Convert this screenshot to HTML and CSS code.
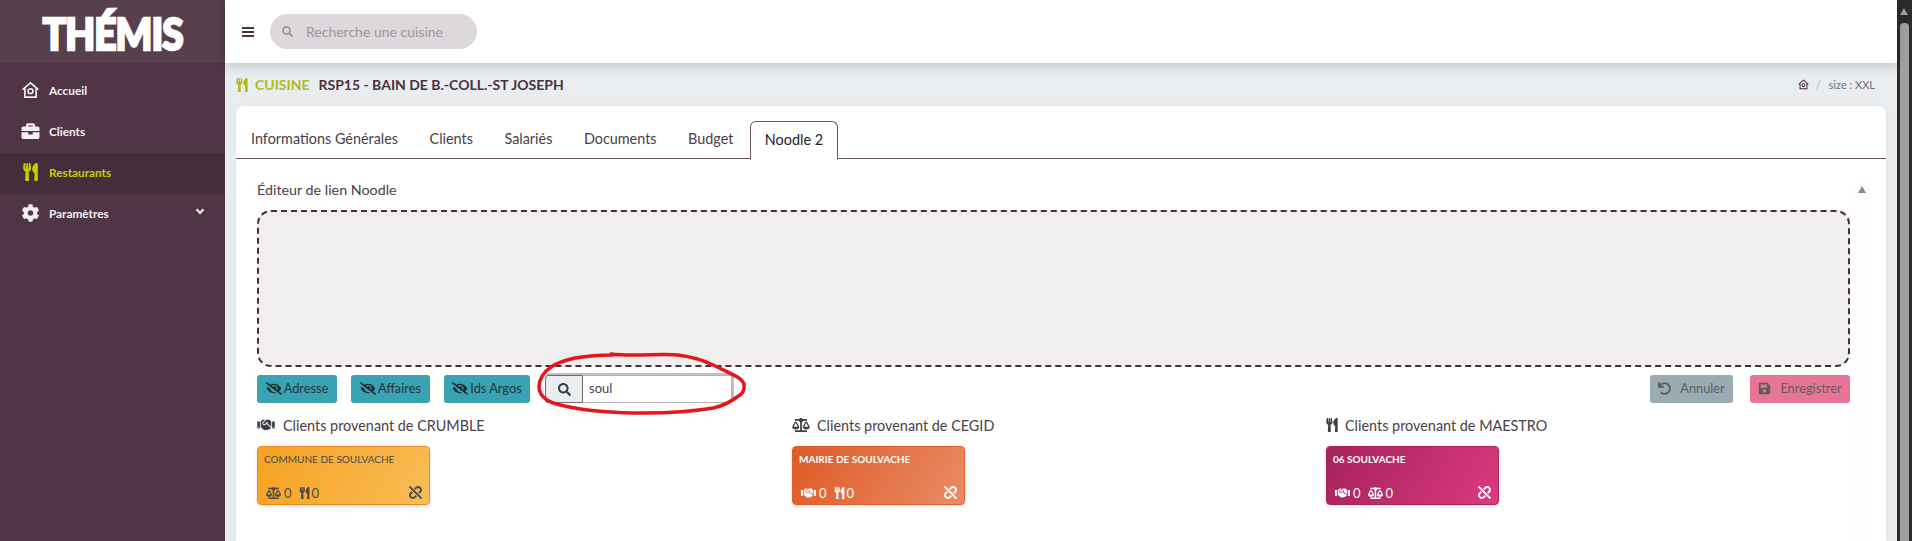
FILE: index.html
```html
<!DOCTYPE html>
<html lang="fr">
<head>
    <meta charset="UTF-8">
    <title>Thémis - Cuisine</title>
    <link rel="stylesheet" href="styles.css">
</head>
<body>

<svg class="defs" width="0" height="0">
    <symbol id="i-search" viewBox="0 0 512 512"><path d="M505 442.7L405.3 343c-4.5-4.5-10.6-7-17-7H372c27.6-35.3 44-79.7 44-128C416 93.1 322.9 0 208 0S0 93.1 0 208s93.1 208 208 208c48.3 0 92.7-16.4 128-44v16.3c0 6.4 2.5 12.5 7 17l99.7 99.7c9.4 9.4 24.6 9.4 33.9 0l28.3-28.3c9.4-9.4 9.4-24.6.1-34zM208 336c-70.7 0-128-57.2-128-128 0-70.7 57.2-128 128-128 70.7 0 128 57.2 128 128 0 70.7-57.2 128-128 128z"/></symbol>
    <symbol id="i-utensils" viewBox="0 0 416 512"><path d="M207.9 15.2c.8 4.7 16.1 94.5 16.1 128.8 0 52.3-27.8 89.6-68.9 104.6L168 486.7c.7 13.7-10.2 25.3-24 25.3H80c-13.7 0-24.7-11.5-24-25.3l12.9-238.1C27.7 233.6 0 196.2 0 144 0 109.6 15.3 19.9 16.1 15.2 19.3-5.1 61.4-5.4 64 16.3v141.2c1.3 3.4 15.1 3.2 16 0 1.4-25.3 7.9-139.2 8-141.8 3.3-20.8 44.7-20.8 47.9 0 .2 2.7 6.6 116.5 8 141.8.9 3.2 14.8 3.4 16 0V16.3c2.6-21.6 44.8-21.4 48-1.1zm119.2 285.7l-15 185.1c-1.2 14 9.9 26 23.9 26h56c13.3 0 24-10.7 24-24V24c0-13.2-10.7-24-24-24-82.5 0-221.4 178.5-64.9 300.9z"/></symbol>
    <symbol id="i-briefcase" viewBox="0 0 512 512"><path d="M320 336c0 8.84-7.16 16-16 16h-96c-8.84 0-16-7.16-16-16v-48H0v144c0 25.6 22.4 48 48 48h416c25.6 0 48-22.4 48-48V288H320v48zm144-208h-80V80c0-25.6-22.4-48-48-48H176c-25.6 0-48 22.4-48 48v48H48c-25.6 0-48 22.4-48 48v80h512v-80c0-25.6-22.4-48-48-48zm-144 0H192V96h128v32z"/></symbol>
    <symbol id="i-cog" viewBox="0 0 512 512"><path d="M487.4 315.7l-42.6-24.6c4.3-23.2 4.3-47 0-70.2l42.6-24.6c4.9-2.8 7.1-8.6 5.5-14-11.1-35.6-30-67.8-54.7-94.6-3.8-4.1-10-5.1-14.8-2.3L380.8 110c-17.9-15.4-38.5-27.3-60.8-35.1V25.8c0-5.6-3.9-10.5-9.4-11.7-36.7-8.2-74.3-7.8-109.2 0-5.5 1.2-9.4 6.1-9.4 11.7V75c-22.2 7.9-42.8 19.8-60.8 35.1L88.7 85.5c-4.9-2.8-11-1.9-14.8 2.3-24.7 26.7-43.6 58.9-54.7 94.6-1.7 5.4.6 11.2 5.5 14L67.3 221c-4.3 23.2-4.3 47 0 70.2l-42.6 24.6c-4.9 2.8-7.1 8.6-5.5 14 11.1 35.6 30 67.8 54.7 94.6 3.8 4.1 10 5.1 14.8 2.3l42.6-24.6c17.9 15.4 38.5 27.3 60.8 35.1v49.2c0 5.6 3.9 10.5 9.4 11.7 36.7 8.2 74.3 7.8 109.2 0 5.5-1.2 9.4-6.1 9.4-11.7v-49.2c22.2-7.9 42.8-19.8 60.8-35.1l42.6 24.6c4.9 2.8 11 1.9 14.8-2.3 24.7-26.7 43.6-58.9 54.7-94.6 1.5-5.5-.7-11.3-5.6-14.1zM256 336c-44.1 0-80-35.9-80-80s35.9-80 80-80 80 35.9 80 80-35.9 80-80 80z"/></symbol>
    <symbol id="i-home" viewBox="0 0 24 24"><path d="M1.5 11.5L12 2.5l10.5 9M4.5 9.5V21.5h15V9.5" fill="none" stroke="currentColor" stroke-width="2.2"/><circle cx="12" cy="13.5" r="3.2" fill="none" stroke="currentColor" stroke-width="2.2"/></symbol>
    <symbol id="i-eye-slash" viewBox="0 0 640 512"><path d="M320 400c-75.85 0-137.25-58.71-142.9-133.11L72.2 185.82c-13.79 17.3-26.48 35.59-36.72 55.59a32.35 32.35 0 0 0 0 29.19C89.71 376.41 197.07 448 320 448c26.91 0 52.87-4 77.89-10.46L346 397.39a144.13 144.13 0 0 1-26 2.61zm313.82 58.1l-110.55-85.44a331.25 331.25 0 0 0 81.25-102.07 32.35 32.35 0 0 0 0-29.19C550.29 135.59 442.93 64 320 64a308.15 308.15 0 0 0-147.32 37.7L45.46 3.37A16 16 0 0 0 23 6.18L3.37 31.45A16 16 0 0 0 6.18 53.9l588.36 454.73a16 16 0 0 0 22.46-2.81l19.64-25.27a16 16 0 0 0-2.82-22.45zm-183.72-142l-39.3-30.38A94.75 94.75 0 0 0 416 256a94.76 94.76 0 0 0-121.31-92.21A47.65 47.65 0 0 1 304 192a46.64 46.64 0 0 1-1.54 10l-73.61-56.89A142.31 142.31 0 0 1 320 112a143.92 143.92 0 0 1 144 144c0 21.63-5.29 41.79-13.9 60.11z"/></symbol>
    <symbol id="i-undo" viewBox="0 0 512 512"><path d="M212.333 224.333H12c-6.627 0-12-5.373-12-12V12C0 5.373 5.373 0 12 0h48c6.627 0 12 5.373 12 12v78.112C117.773 39.279 184.26 7.47 258.175 8.007c136.906.994 246.448 111.623 246.157 248.532C504.041 393.258 393.12 504 256.333 504c-64.089 0-122.496-24.313-166.51-64.215-5.099-4.622-5.334-12.554-.467-17.42l33.967-33.967c4.474-4.474 11.662-4.717 16.401-.525C170.76 415.336 211.58 432 256.333 432c97.268 0 176-78.716 176-176 0-97.267-78.716-176-176-176-58.496 0-110.28 28.476-142.274 72.333h98.274c6.627 0 12 5.373 12 12v48c0 6.627-5.373 12-12 12z"/></symbol>
    <symbol id="i-save" viewBox="0 0 448 512"><path d="M433.941 129.941l-83.882-83.882A48 48 0 0 0 316.118 32H48C21.49 32 0 53.49 0 80v352c0 26.51 21.49 48 48 48h352c26.51 0 48-21.49 48-48V163.882a48 48 0 0 0-14.059-33.941zM224 416c-35.346 0-64-28.654-64-64 0-35.346 28.654-64 64-64s64 28.654 64 64c0 35.346-28.654 64-64 64zm96-304.52V212c0 6.627-5.373 12-12 12H76c-6.627 0-12-5.373-12-12V108c0-6.627 5.373-12 12-12h228.52c3.183 0 6.235 1.264 8.485 3.515l3.48 3.48A11.996 11.996 0 0 1 320 111.48z"/></symbol>
    <symbol id="i-unlink" viewBox="0 0 512 512"><path d="M304.083 405.907c4.686 4.686 4.686 12.284 0 16.971l-44.674 44.674c-59.263 59.262-155.693 59.266-214.961 0-59.264-59.265-59.264-155.696 0-214.96l44.675-44.675c4.686-4.686 12.284-4.686 16.971 0l39.598 39.598c4.686 4.686 4.686 12.284 0 16.971l-44.675 44.674c-28.072 28.073-28.072 73.75 0 101.823 28.072 28.072 73.75 28.073 101.824 0l44.674-44.674c4.686-4.686 12.284-4.686 16.971 0l39.597 39.598zm-56.568-260.216c4.686 4.686 12.284 4.686 16.971 0l44.674-44.674c28.072-28.075 73.75-28.073 101.824 0 28.072 28.073 28.072 73.75 0 101.823l-44.675 44.674c-4.686 4.686-4.686 12.284 0 16.971l39.598 39.598c4.686 4.686 12.284 4.686 16.971 0l44.675-44.675c59.265-59.265 59.265-155.695 0-214.96-59.266-59.264-155.696-59.264-214.961 0l-44.674 44.674c-4.686 4.686-4.686 12.284 0 16.971l39.597 39.598zm234.828 359.28l22.627-22.627c9.373-9.373 9.373-24.569 0-33.941L63.598 7.029c-9.373-9.373-24.569-9.373-33.941 0L7.029 29.657c-9.373 9.373-9.373 24.569 0 33.941l441.373 441.373c9.373 9.372 24.569 9.372 33.941 0z"/></symbol>
    <symbol id="i-scale" viewBox="0 0 640 512"><path d="M256 336h-.02c0-16.18 1.34-8.73-85.05-181.51-17.65-35.29-68.19-35.36-85.87 0C-2.06 328.75.02 320.33.02 336H0c0 44.18 57.31 80 128 80s128-35.82 128-80zM128 176l72 144H56l72-144zm511.98 160c0-16.18 1.34-8.73-85.05-181.51-17.65-35.29-68.19-35.36-85.87 0-87.12 174.26-85.04 165.84-85.04 181.51H384c0 44.18 57.31 80 128 80s128-35.82 128-80h-.02zM440 320l72-144 72 144H440zm88 128H352V153.25c23.51-10.29 41.16-31.48 46.39-57.25H528c8.84 0 16-7.16 16-16V48c0-8.84-7.16-16-16-16H383.64C369.04 12.68 346.09 0 320 0s-49.04 12.68-63.64 32H112c-8.84 0-16 7.16-16 16v32c0 8.84 7.16 16 16 16h129.61c5.23 25.76 22.87 46.96 46.39 57.25V448H112c-8.84 0-16 7.16-16 16v32c0 8.84 7.16 16 16 16h416c8.84 0 16-7.16 16-16v-32c0-8.84-7.16-16-16-16z"/></symbol>
    <symbol id="i-handshake" viewBox="0 0 640 512"><path d="M434.7 64h-85.9c-8 0-15.7 3-21.6 8.4l-98.3 90c-.1.1-.2.3-.3.4-16.6 15.6-16.3 40.5-2.1 56 12.7 13.9 39.4 17.6 56.1 2.7.1-.1.3-.1.4-.2l79.9-73.2c6.5-5.9 16.7-5.5 22.6 1 6 6.5 5.5 16.6-1 22.6l-26.1 23.9L504 313.8c2.9 2.4 5.5 5 7.9 7.7V128l-54.6-54.6c-5.9-6-14.1-9.4-22.6-9.4zM544 128.2v223.9c0 17.7 14.3 32 32 32h64V128.2h-96zm48 223.9c-8.8 0-16-7.2-16-16s7.2-16 16-16 16 7.2 16 16-7.2 16-16 16zM0 384h64c17.7 0 32-14.3 32-32V128.2H0V384zm48-63.9c8.8 0 16 7.2 16 16s-7.2 16-16 16-16-7.2-16-16c0-8.9 7.2-16 16-16zm435.9 18.6L334.6 217.5l-30 27.5c-29.7 27.1-75.2 24.5-101.7-4.4-26.9-29.4-24.8-74.9 4.4-101.7L289.1 64h-83.8c-8.5 0-16.6 3.4-22.6 9.4L128 128v223.9h18.3l90.5 81.9c27.4 22.3 67.7 18.1 90-9.3l.2-.2 17.9 15.5c15.9 13 39.4 10.5 52.3-5.4l31.4-38.6 5.4 4.4c13.7 11.1 33.9 9.1 45-4.7l9.5-11.7c11.2-13.8 9.1-33.9-4.6-45.1z"/></symbol>
</svg>

<div class="app">
    <aside class="sidebar">
        <div class="logo"><span>THÉMIS</span></div>
        <nav class="menu">
            <a class="menu-item"><svg class="menu-ico"><use href="#i-home"/></svg>Accueil</a>
            <a class="menu-item"><svg class="menu-ico"><use href="#i-briefcase"/></svg>Clients</a>
            <a class="menu-item active"><svg class="menu-ico"><use href="#i-utensils"/></svg>Restaurants</a>
            <a class="menu-item"><svg class="menu-ico"><use href="#i-cog"/></svg>Paramètres<span class="chevron"></span></a>
        </nav>
    </aside>

    <div class="main">
        <header class="topbar">
            <div class="burger"><i></i><i></i><i></i></div>
            <div class="topsearch">
                <svg class="topsearch-ico"><use href="#i-search"/></svg>
                <span>Recherche une cuisine</span>
            </div>
        </header>

        <div class="content">
            <div class="titlebar">
                <div class="page-title">
                    <svg class="title-ico"><use href="#i-utensils"/></svg>
                    <span class="title-green">CUISINE</span>
                    <span class="title-name">RSP15 - BAIN DE B.-COLL.-ST JOSEPH</span>
                </div>
                <div class="crumbs">
                    <svg class="crumb-ico"><use href="#i-home"/></svg>
                    <span class="crumb-sep">/</span>
                    <span>size : XXL</span>
                </div>
            </div>

            <section class="card">
                <ul class="tabs">
                    <li>Informations Générales</li>
                    <li>Clients</li>
                    <li>Salariés</li>
                    <li>Documents</li>
                    <li>Budget</li>
                    <li class="active">Noodle 2</li>
                </ul>

                <div class="pane">
                    <div class="inner-scroll"><span class="arrow-up"></span></div>
                    <h3 class="pane-title">Éditeur de lien Noodle</h3>
                    <div class="dropzone"></div>

                    <div class="toolbar">
                        <button class="btn btn-teal"><svg class="eye"><use href="#i-eye-slash"/></svg>Adresse</button>
                        <button class="btn btn-teal"><svg class="eye"><use href="#i-eye-slash"/></svg>Affaires</button>
                        <button class="btn btn-teal"><svg class="eye"><use href="#i-eye-slash"/></svg>Ids Argos</button>
                        <div class="searchgroup">
                            <span class="addon"><svg class="addon-ico"><use href="#i-search"/></svg></span>
                            <input class="searchinput" type="text" value="soul">
                        </div>
                        <button class="btn btn-grey"><svg class="btn-ico"><use href="#i-undo"/></svg>Annuler</button>
                        <button class="btn btn-pink"><svg class="btn-ico"><use href="#i-save"/></svg>Enregistrer</button>
                    </div>

                    <div class="sources">
                        <div class="source">
                            <h4><svg class="src-ico"><use href="#i-handshake"/></svg>Clients provenant de CRUMBLE</h4>
                            <div class="tile tile-orange">
                                <div class="tile-name">COMMUNE DE SOULVACHE</div>
                                <div class="tile-foot">
                                    <svg class="tile-ico"><use href="#i-scale"/></svg><span>0</span>
                                    <svg class="tile-ico narrow"><use href="#i-utensils"/></svg><span>0</span>
                                    <svg class="tile-unlink"><use href="#i-unlink"/></svg>
                                </div>
                            </div>
                        </div>
                        <div class="source">
                            <h4><svg class="src-ico src-scale"><use href="#i-scale"/></svg>Clients provenant de CEGID</h4>
                            <div class="tile tile-red">
                                <div class="tile-name">MAIRIE DE SOULVACHE</div>
                                <div class="tile-foot">
                                    <svg class="tile-ico"><use href="#i-handshake"/></svg><span>0</span>
                                    <svg class="tile-ico narrow"><use href="#i-utensils"/></svg><span>0</span>
                                    <svg class="tile-unlink"><use href="#i-unlink"/></svg>
                                </div>
                            </div>
                        </div>
                        <div class="source">
                            <h4><svg class="src-ico src-narrow"><use href="#i-utensils"/></svg>Clients provenant de MAESTRO</h4>
                            <div class="tile tile-pink">
                                <div class="tile-name">06 SOULVACHE</div>
                                <div class="tile-foot">
                                    <svg class="tile-ico"><use href="#i-handshake"/></svg><span>0</span>
                                    <svg class="tile-ico"><use href="#i-scale"/></svg><span>0</span>
                                    <svg class="tile-unlink"><use href="#i-unlink"/></svg>
                                </div>
                            </div>
                        </div>
                    </div>
                </div>
            </section>
        </div>
    </div>

    <div class="winscroll"><span class="winscroll-arrow"></span><span class="winscroll-thumb"></span></div>
</div>

<!-- annotation rouge dessinee a la main sur la capture -->
<svg class="scribble" viewBox="0 0 220 70" width="220" height="70">
    <path d="M76 2 C 100 5 125 1 143 3 C 158 5 168 8 178 13 C 192 20 209 26 209 33 C 210 39 206 43 202 45 C 194 51 188 54 178 56 C 155 60 132 61 109 61 C 85 61 62 60 40 56 C 28 54 18 52 12 48 C 6 44 4 40 4 35 C 4 27 9 20 16 15 C 23 10 31 8 40 6 C 52 4 64 3 78 3" fill="none" stroke="#e8141c" stroke-width="3.5" stroke-linecap="round"/>
</svg>

</body>
</html>
```

FILE: styles.css
```css
html, body {
    margin: 0;
    padding: 0;
    height: 541px;
    overflow: hidden;
}
body {
    font-family: Lato, "Open Sans", sans-serif;
    color: #4a4048;
    background: #e9edf0;
    position: relative;
}
.defs {
    position: absolute;
}
.app {
    display: flex;
    height: 541px;
    overflow: hidden;
}

/* sidebar */
.sidebar {
    width: 225px;
    flex: none;
    background: #503547;
}
.logo {
    height: 63px;
    background: #573f4d;
    display: flex;
    align-items: center;
    justify-content: center;
    color: white;
    font-size: 43px;
    font-weight: 900;
    line-height: 1;
}
.logo span {
    display: block;
    margin-top: 3px;
    letter-spacing: -1px;
    -webkit-text-stroke: 2.5px white;
    transform: scaleX(0.9);
}
.menu {
    display: block;
    padding-top: 7.5px;
}
.menu-item {
    display: flex;
    align-items: center;
    height: 41px;
    box-sizing: border-box;
    padding: 0 0 2px 21px;
    color: #f3eff1;
    font-size: 11.8px;
    font-weight: 700;
    position: relative;
}
.menu-ico {
    width: 19px;
    height: 18px;
    margin-right: 9px;
    fill: currentColor;
}
.menu-item.active {
    background: #452d3b;
    color: #c4d100;
}
.chevron {
    position: absolute;
    right: 22px;
    top: 13px;
    width: 4px;
    height: 4px;
    border-right: 2px solid #f3eff1;
    border-bottom: 2px solid #f3eff1;
    transform: rotate(45deg);
}

/* barre du haut */
.main {
    flex: 1;
    min-width: 0;
    display: flex;
    flex-direction: column;
}
.topbar {
    height: 63px;
    flex: none;
    background: white;
    display: flex;
    align-items: center;
    padding-left: 17px;
    box-shadow: 0 3px 10px rgba(0, 0, 0, 0.18);
    position: relative;
    z-index: 2;
}
.burger {
    width: 12px;
    margin-right: 16px;
}
.burger i {
    display: block;
    height: 2px;
    background: #4a3040;
    margin: 2px 0;
}
.topsearch {
    width: 207px;
    height: 35px;
    border-radius: 18px;
    background: #dcd8db;
    display: flex;
    align-items: center;
    color: #9d979b;
    font-size: 14px;
    padding-bottom: 1px;
    box-sizing: border-box;
}
.topsearch-ico {
    width: 11px;
    height: 11px;
    fill: #9d979b;
    margin: 0 13px 0 12px;
}

/* contenu */
.content {
    flex: 1;
    min-height: 0;
    padding: 0 11px;
}
.titlebar {
    height: 43px;
    display: flex;
    align-items: center;
    justify-content: space-between;
    padding-right: 11px;
}
.page-title {
    display: flex;
    align-items: center;
    font-size: 14px;
}
.title-ico {
    width: 12px;
    height: 14px;
    fill: #b3ba1c;
    margin-right: 7px;
}
.title-green {
    color: #b3ba1c;
    font-weight: 700;
    margin-right: 9px;
}
.title-name {
    color: #49303f;
    font-weight: 700;
}
.crumbs {
    display: flex;
    align-items: center;
    font-size: 11px;
    color: #6b6f7a;
}
.crumb-ico {
    width: 11px;
    height: 11px;
    color: #49303f;
}
.crumb-sep {
    margin: 0 8px 0 7px;
    color: #a9aeb6;
}

.card {
    background: white;
    border-radius: 8px 8px 0 0;
    height: 435px;
    overflow: hidden;
    box-shadow: 0 0 6px rgba(0, 0, 0, 0.05);
}
.tabs {
    list-style: none;
    margin: 0;
    padding: 15px 0 0;
    display: flex;
    border-bottom: 1px solid #6b5560;
    height: 37px;
}
.tabs li {
    padding: 0 15px;
    margin-right: 1.5px;
    height: 37px;
    line-height: 35px;
    font-size: 14.4px;
    color: #4a4048;
}
.tabs li.active {
    color: #222;
    background: white;
    border: 1px solid #6b5560;
    border-bottom: 1px solid white;
    border-radius: 6px 6px 0 0;
    padding: 0 14px;
}

.pane {
    height: 382px;
    box-sizing: border-box;
    padding: 21px 0 0 21px;
    position: relative;
}
.inner-scroll {
    position: absolute;
    left: 1619px;
    top: 21px;
    bottom: 0;
    width: 15px;
    background: #fdfdfd;
}
.arrow-up {
    position: absolute;
    left: 3px;
    top: 6px;
    border-left: 4.5px solid transparent;
    border-right: 4.5px solid transparent;
    border-bottom: 7px solid #8a8a8a;
}
.pane-title {
    margin: 0;
    font-size: 14.3px;
    font-weight: 400;
    line-height: 20px;
    color: #4a4048;
}
.dropzone {
    width: 1593px;
    height: 157px;
    box-sizing: border-box;
    margin-top: 10px;
    background: #f0eeef;
    border: 2px dashed #472e3d;
    border-radius: 14px;
}

.toolbar {
    display: flex;
    width: 1593px;
    margin-top: 8px;
    align-items: center;
}
.btn {
    height: 28px;
    border: none;
    border-radius: 3px;
    padding: 0 0 3px;
    font-family: inherit;
    font-size: 12.8px;
    color: #3c3c3c;
    display: flex;
    align-items: center;
    justify-content: center;
}
.btn svg {
    margin-top: 2px;
}
.btn-teal {
    background: #38a3b3;
    margin-right: 14px;
    color: #24363c;
}
.btn-teal:nth-child(1) { width: 80px; }
.btn-teal:nth-child(2) { width: 79px; }
.btn-teal:nth-child(3) { width: 86px; }
.eye {
    width: 16px;
    height: 13px;
    fill: #1f2a2e;
    margin-right: 2px;
}
.btn-grey {
    background: #9aabb3;
    color: #5f5f5f;
    width: 83px;
    margin-left: auto;
    margin-right: 17px;
}
.btn-pink {
    background: #e87595;
    color: #5f5f5f;
    width: 100px;
}
.btn-ico {
    width: 13px;
    height: 13px;
    fill: #5c5c5c;
    margin-right: 9px;
}

.searchgroup {
    display: flex;
    height: 28px;
    width: 187px;
    margin-left: 1px;
    box-shadow: 2px -2px 0 #c3bcc0;
}
.addon {
    width: 36px;
    background: #e9edf0;
    border: 1px solid #77656f;
    border-radius: 3px 0 0 3px;
    display: flex;
    align-items: center;
    justify-content: center;
}
.addon-ico {
    width: 13px;
    height: 13px;
    fill: #3c3c44;
}
.searchinput {
    flex: 1;
    min-width: 0;
    border: 1px solid #b9b0b5;
    border-left: none;
    padding: 0 6px 3px;
    font-family: inherit;
    font-size: 13px;
    color: #4a4048;
    background: white;
    outline: none;
}

.sources {
    display: grid;
    grid-template-columns: 535px 534px 1fr;
    width: 1605px;
    margin-top: 12px;
}
.source h4 {
    margin: 0;
    height: 20px;
    display: flex;
    align-items: center;
    font-size: 14.4px;
    font-weight: 400;
    color: #4a4048;
}
.src-ico {
    width: 18px;
    height: 14px;
    fill: #3d3d45;
    margin-right: 8px;
}
.src-ico.src-scale {
    margin-right: 7px;
}
.src-ico.src-narrow {
    width: 12px;
    margin-right: 7px;
}
.tile {
    width: 173px;
    height: 59px;
    box-sizing: border-box;
    margin-top: 11px;
    border-radius: 4px;
    padding: 5px 6px 0;
    position: relative;
    box-shadow: 0 1px 3px rgba(0, 0, 0, 0.15);
}
.tile-name {
    font-size: 10px;
    line-height: 14px;
}
.tile-foot {
    position: absolute;
    left: 8px;
    right: 7px;
    bottom: 3px;
    height: 17px;
    display: flex;
    align-items: center;
    font-size: 13px;
}
.tile-ico {
    width: 15px;
    height: 12px;
    fill: currentColor;
    margin-right: 3px;
}
.tile-ico.narrow {
    width: 11px;
    margin-left: 7px;
    margin-right: 2px;
}
.tile-foot span + .tile-ico:not(.narrow) {
    margin-left: 7px;
}
.tile-unlink {
    width: 13px;
    height: 13px;
    fill: currentColor;
    margin-left: auto;
}
.tile-orange {
    background: linear-gradient(120deg, #f7a11f, #f8bd58);
    border: 1px solid #ee8a1e;
    color: #4a4a4a;
}
.tile-red {
    background: linear-gradient(120deg, #df5a26, #e88c66);
    border: 1px solid #e0602d;
    color: white;
}
.tile-pink {
    background: linear-gradient(120deg, #a8215c, #d93a80);
    border: 1px solid #a8215c;
    color: white;
}
.tile-red .tile-name,
.tile-pink .tile-name {
    font-weight: 700;
}

/* barre de defilement de la fenetre */
.winscroll {
    width: 15px;
    flex: none;
    background: #2b2b2b;
    position: relative;
}
.winscroll-arrow {
    position: absolute;
    left: 3px;
    top: 8px;
    border-left: 4.5px solid transparent;
    border-right: 4.5px solid transparent;
    border-bottom: 7px solid #a0a0a0;
}
.winscroll-thumb {
    position: absolute;
    left: 3px;
    top: 23px;
    bottom: 0;
    width: 9px;
    border-radius: 4px 4px 0 0;
    background: #a0a0a0;
}

.scribble {
    position: absolute;
    left: 535px;
    top: 352px;
}
```
